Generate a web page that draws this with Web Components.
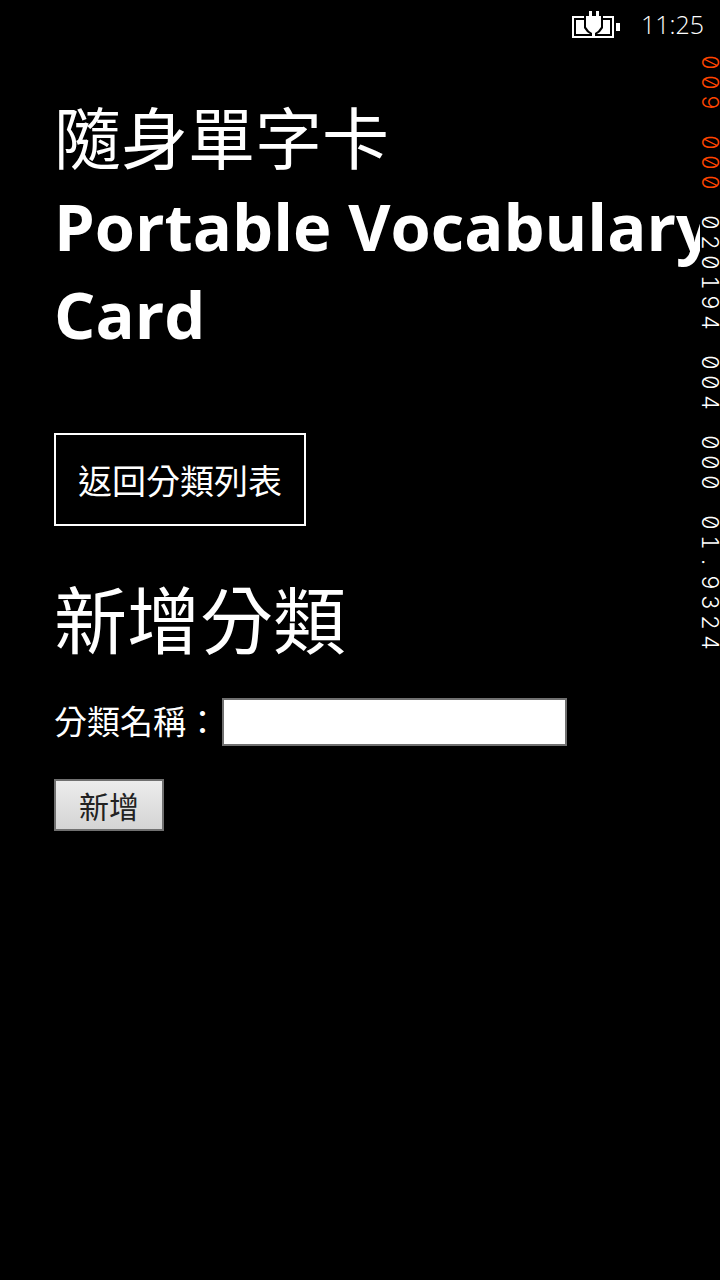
<!DOCTYPE html>
<html lang="zh-Hant">
<head>
<meta charset="utf-8">
<meta name="viewport" content="width=device-width, initial-scale=1">
<title>隨身單字卡 Portable Vocabulary Card</title>
<style>
html, body { margin: 0; background: #000; }
body { color: #fff; font-family: "Noto Sans CJK TC", "Open Sans", sans-serif; }
</style>
</head>
<body>
<phone-screen>
  <status-bar slot="status" time="11:25"></status-bar>
  <frame-counter slot="counter" alert="009 000" values="020194 004 000 01.9324"></frame-counter>
  <app-title>隨身單字卡<span slot="latin">Portable Vocabulary Card</span></app-title>
  <back-link href="#categories">返回分類列表</back-link>
  <category-form heading="新增分類" label="分類名稱：" action="新增"></category-form>
</phone-screen>

<script>
const attach = (host, html) => {
  const t = document.createElement('template');
  t.innerHTML = html;
  const root = host.attachShadow({ mode: 'open' });
  root.appendChild(t.content.cloneNode(true));
  return root;
};

customElements.define('phone-screen', class extends HTMLElement {
  constructor() {
    super();
    attach(this, `
      <style>
        :host { display: flex; flex-direction: column; min-height: 100vh; background: #000; }
        .body { display: grid; grid-template-columns: minmax(0, 1fr) 20px; flex: 1; }
        main { overflow: hidden; padding: 43px 0 48px 54px; }
      </style>
      <slot name="status"></slot>
      <div class="body"><main><slot></slot></main><slot name="counter"></slot></div>`);
  }
});

customElements.define('status-bar', class extends HTMLElement {
  connectedCallback() {
    attach(this, `
      <style>
        :host { display: flex; justify-content: flex-end; align-items: center; gap: 20px;
          height: 48px; padding: 0 16px; box-sizing: border-box; }
        svg { display: block; }
        time { min-width: 64px; text-align: right; font: 300 25px/48px "Open Sans", sans-serif; }
      </style>
      <svg width="48" height="30" viewBox="0 0 48 30" role="img" aria-label="Charging">
        <path fill="none" stroke="#fff" stroke-width="2" d="M1 8H41V28H1Z"/>
        <path fill="#fff" d="M4 11H38V25H4ZM44 14H48V22H44Z"/>
        <path fill="#000" d="M12 6H31V19L28 23L25 25V27H18V25L15 23L12 19Z"/>
        <path fill="#fff" d="M17 2H20V7H24V2H27V7H29V18L26 22L23 24V29H20V24L17 22L14 18V7H17Z"/>
      </svg>
      <time></time>`).querySelector('time').textContent = this.getAttribute('time');
  }
});

customElements.define('frame-counter', class extends HTMLElement {
  connectedCallback() {
    const root = attach(this, `
      <style>
        :host { display: flex; flex-direction: column; gap: 20px; padding-top: 4px;
          font: 300 23px/20px Inter, sans-serif; font-feature-settings: "zero", "tnum"; }
        .group { display: grid; grid-auto-rows: 20px; }
        .alert { color: #ff4500; }
        .group span { writing-mode: vertical-rl; width: 20px; text-align: center; }
      </style>`);
    const add = (values, name) => values.split(' ').forEach(value => {
      const group = document.createElement('div');
      group.className = 'group ' + name;
      for (const ch of value) {
        const cell = document.createElement('span');
        cell.textContent = ch;
        group.append(cell);
      }
      root.append(group);
    });
    add(this.getAttribute('alert'), 'alert');
    add(this.getAttribute('values'), 'normal');
  }
});

customElements.define('app-title', class extends HTMLElement {
  constructor() {
    super();
    attach(this, `
      <style>
        :host { display: block; }
        h1 { margin: 0; font-size: 67px; font-weight: 400; line-height: 88px; }
        .latin { display: block; width: max-content; max-width: 660px; margin-top: 3px;
          font: 700 65px/88px "Open Sans", sans-serif; }
      </style>
      <h1><slot></slot><span class="latin"><slot name="latin"></slot></span></h1>`);
  }
});

customElements.define('back-link', class extends HTMLElement {
  connectedCallback() {
    attach(this, `
      <style>
        :host { display: flex; margin-top: 75px; }
        a { padding: 20px 22px; border: 2px solid #fff; color: #fff; text-decoration: none;
          font-size: 34px; line-height: 49px; }
      </style>
      <a><slot></slot></a>`).querySelector('a').href = this.getAttribute('href');
  }
});

customElements.define('category-form', class extends HTMLElement {
  connectedCallback() {
    const root = attach(this, `
      <style>
        :host { display: block; margin-top: 44px; }
        h2 { margin: 0; font-size: 73px; font-weight: 400; line-height: 92px; }
        form { display: flex; flex-direction: column; align-items: flex-start; gap: 33px; margin-top: 36px; }
        .field { display: flex; align-items: flex-start; gap: 3px; max-width: 100%; }
        label { font-size: 33px; line-height: 44px; white-space: nowrap; }
        input, button { box-sizing: border-box; border: 2px solid #707070; border-radius: 0;
          font-family: inherit; font-size: 30px; color: #222; }
        input { width: 345px; min-width: 0; height: 48px; padding: 0 8px; background: #fff; }
        button { height: 52px; padding: 0 23px; line-height: 48px;
          background: linear-gradient(#ececec, #d4d4d4); }
      </style>
      <h2></h2>
      <form>
        <div class="field"><label for="name"></label><input id="name" type="text"></div>
        <button type="button"></button>
      </form>`);
    root.querySelector('h2').textContent = this.getAttribute('heading');
    root.querySelector('label').textContent = this.getAttribute('label');
    root.querySelector('button').textContent = this.getAttribute('action');
  }
});
</script>
</body>
</html>
